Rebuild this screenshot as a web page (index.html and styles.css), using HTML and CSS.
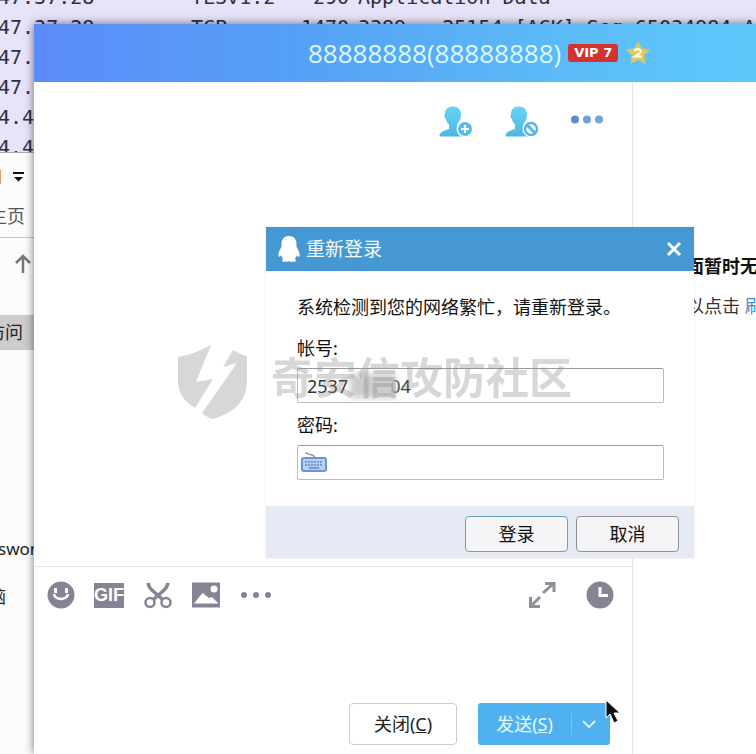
FILE: index.html
```html
<!DOCTYPE html>
<html lang="zh-CN">
<head>
<meta charset="utf-8">
<title>重新登录</title>
<link rel="stylesheet" href="styles.css">
</head>
<body>
<div class="desktop">
  <div class="packets">
    <div class="packet"><span>47.37.28</span><span>TLSv1.2</span><span class="length">290</span><span>Application Data</span></div>
    <div class="packet"><span>47.37.28</span><span>TCP</span><span class="length">1470</span><span>3389 → 25154 [ACK] Seq=65034984 A</span></div>
    <div class="packet"><span>47.</span></div>
    <div class="packet"><span>47.</span></div>
    <div class="packet"><span>4.4</span></div>
    <div class="packet"><span>4.4</span></div>
  </div>
  <div class="explorer">
    <div class="quick">
      <i class="folder"></i>
      <svg width="12" height="12" viewBox="0 0 12 12"><path d="M1 1h11v2H1zM2 6h9l-4.500 4.500z" fill="#111"/></svg>
    </div>
    <div class="tab">主页</div>
    <div class="up"><svg width="18" height="20" viewBox="0 0 18 20"><path d="M9 19V2M2 9l7-7 7 7" fill="none" stroke="#777" stroke-width="2.500"/></svg></div>
    <div class="access">访问</div>
    <div class="password">sword</div>
    <div class="computer">脑</div>
  </div>

  <main class="chat">
    <header class="chat-head">
      <h1>88888888(88888888)</h1>
      <span class="vip">VIP 7</span>
      <svg class="star" width="26" height="26" viewBox="0 0 26 26"><path d="M13 2l3.200 7 7.800.8-5.600 5.300 1.500 7.900-6.900-3.900L6.100 23l1.500-7.900L2 9.800 9.800 9z" fill="#e7c955" stroke="#c9c77c" stroke-width="1.500" stroke-linejoin="round"/><path d="M9 10q6-2 7 1 0 2-6 5.500h7" fill="none" stroke="#fffbe0" stroke-width="2.200"/></svg>
    </header>
    <div class="chat-body">
      <section class="conversation">
        <div class="actions">
          <button aria-label="添加好友"><svg width="36" height="34" viewBox="0 0 36 34"><defs><linearGradient id="person" x1="0" y1="0" x2="0" y2="1"><stop offset="0" stop-color="#68d3f5"/><stop offset="1" stop-color="#4fb4e2"/></linearGradient></defs><path d="M7 9C7 4 10 1.500 15 1.500s8 3 8 8c0 4-1.500 7-3.500 9v3l5 3v7H1.500c0-4 3-5.500 9.500-7.500v-4.500C9 17.500 8 15 7.500 13L6 12z" fill="url(#person)"/><circle cx="27" cy="24" r="8.500" fill="#fff"/><circle cx="27" cy="24" r="7" fill="#5cbce6"/><path d="M27 20v8M23 24h8" stroke="#fff" stroke-width="2"/></svg></button>
          <button aria-label="屏蔽"><svg width="36" height="34" viewBox="0 0 36 34"><path d="M7 9C7 4 10 1.500 15 1.500s8 3 8 8c0 4-1.500 7-3.500 9v3l5 3v7H1.500c0-4 3-5.500 9.500-7.500v-4.500C9 17.500 8 15 7.500 13L6 12z" fill="url(#person)"/><circle cx="27" cy="24" r="8.500" fill="#fff"/><circle cx="27" cy="24" r="6" fill="#fff" stroke="#57b8e5" stroke-width="2.500"/><path d="M23 20l8 8" stroke="#57b8e5" stroke-width="3"/></svg></button>
          <button aria-label="更多"><svg width="34" height="34" viewBox="0 0 34 34"><circle cx="5" cy="14.500" r="4" fill="#5f8fcb"/><circle cx="17" cy="14.500" r="4" fill="#719fd6"/><circle cx="29" cy="14.500" r="4" fill="#78a5cf"/></svg></button>
        </div>
        <div class="editor">
          <div class="tools">
            <button aria-label="表情"><svg width="28" height="28" viewBox="0 0 28 28"><circle cx="14" cy="14" r="13.500" fill="#858494"/><path d="M8.500 7v5M19.500 7v5" stroke="#fff" stroke-width="3"/><path d="M7 13c1 6.500 13 6.500 14 0" fill="none" stroke="#fff" stroke-width="2.500"/></svg></button>
            <button class="gif">GIF</button>
            <button aria-label="截图"><svg width="28" height="28" viewBox="0 0 28 28"><path d="M4 2q1 5 5 8l9 8M24 2q-1 5-5 8l-9 8" fill="none" stroke="#858494" stroke-width="3.500"/><circle cx="6" cy="21.500" r="4.500" fill="#fff" stroke="#858494" stroke-width="2.500"/><circle cx="22" cy="21.500" r="4.500" fill="#fff" stroke="#858494" stroke-width="2.500"/></svg></button>
            <button aria-label="图片"><svg width="28" height="28" viewBox="0 0 28 28"><path d="M0 1.500h28v25H0z" fill="#858494"/><path d="M2 22.500L10.500 12l6.500 5 3-1 6.500 6.500z" fill="#fff"/><circle cx="22" cy="8" r="3.500" fill="#fff"/></svg></button>
            <button aria-label="更多工具"><svg width="32" height="28" viewBox="0 0 32 28"><g fill="#858494"><circle cx="4" cy="14" r="3"/><circle cx="16" cy="14" r="3"/><circle cx="28" cy="14" r="3"/></g></svg></button>
            <button class="expand" aria-label="展开"><svg width="28" height="28" viewBox="0 0 28 28"><path d="M15 12L25 3M17 2.500h9V11M12 16L3 25M2.500 16v9.500H12" fill="none" stroke="#8e8d9a" stroke-width="3"/></svg></button>
            <button aria-label="聊天记录"><svg width="28" height="28" viewBox="0 0 28 28"><circle cx="14" cy="14" r="13.500" fill="#858494"/><path d="M14 6v8.500h8" fill="none" stroke="#fff" stroke-width="3"/></svg></button>
          </div>
          <div class="send-row">
            <button class="close-chat">关闭(<u>C</u>)</button>
            <div class="send-group">
              <button class="send">发送(<u>S</u>)</button>
              <button class="send-menu" aria-label="发送选项"><svg width="16" height="10" viewBox="0 0 16 10"><path d="M2 2l6 6 6-6" fill="none" stroke="#d9f3ff" stroke-width="2"/></svg></button>
            </div>
          </div>
        </div>
      </section>
      <aside class="side">
        <strong>面暂时无</strong>
        <p>以点击 <a href="#">刷</a></p>
      </aside>
    </div>
  </main>

  <form class="dialog">
    <header class="dialog-head">
      <svg width="24" height="28" viewBox="0 0 24 28"><path d="M12 1c5 0 7.500 3.500 7.500 8v3c2 3 3.500 6 3 9-.6 1.600-2 .3-2.700-.8-.3 1.500-1 2.500-2 3.500 1.500.8 1.700 2.800-.8 3-2 .2-4 0-5-.8-1 .8-3 1-5 .8-2.500-.2-2.300-2.200-.8-3-1-1-1.700-2-2-3.500-.7 1.100-2.100 2.400-2.700.8-.5-3 1-6 3-9V9C4.500 4.500 7 1 12 1z" fill="#fff"/></svg>
      <h2>重新登录</h2>
      <button type="button" class="dismiss" aria-label="关闭"><svg width="16" height="16" viewBox="0 0 16 16"><path d="M2 2l12 12M14 2L2 14" stroke="#fff" stroke-width="3"/></svg></button>
    </header>
    <div class="fields">
      <p>系统检测到您的网络繁忙，请重新登录。</p>
      <label for="account">帐号:</label>
      <div class="field"><input id="account" type="text" value="2537         04"><i class="smudge"></i></div>
      <label for="secret">密码:</label>
      <div class="field">
        <svg class="keyboard" width="26" height="24" viewBox="0 0 26 24"><path d="M5 1c0 4 8 1 9 6" fill="none" stroke="#8a9bb5" stroke-width="1.500"/><rect x="1" y="7" width="24" height="13" rx="2" fill="#b9d1f3" stroke="#6d94d0" stroke-width="2"/><path d="M4 11h18M4 14h18" stroke="#5d86c6" stroke-width="1.500" stroke-dasharray="2 1"/><path d="M8 17h10" stroke="#5d86c6" stroke-width="1.500"/></svg>
        <input id="secret" type="password">
      </div>
    </div>
    <footer class="dialog-foot">
      <button type="button" class="primary">登录</button>
      <button type="button">取消</button>
    </footer>
  </form>

  <div class="watermark">
    <svg width="70" height="90" viewBox="0 0 70 90"><path d="M0 24q17-3 33-12L18 49l17-3-18 29Q0 65 0 48zM55 17q6 4 14 6v25q0 28-34 38-5-1-11-6l35-50-14 4z" fill="#888"/></svg>
    <span>奇安信攻防社区</span>
  </div>
  <svg class="pointer" width="18" height="26" viewBox="0 0 18 26"><path d="M2 1v18l4-4 4 9 4-2-4-8h6z" fill="#111" stroke="#fff" stroke-width="1"/></svg>
</div>
</body>
</html>
```
FILE: styles.css
```css
* { box-sizing: border-box; }
body, h1, h2, p { margin: 0; }
body {
  font-family: "Noto Sans", "Noto Sans CJK SC", sans-serif;
  font-size: 18px;
  line-height: 24px;
  color: #222;
}
button, input { font: inherit; color: inherit; }
button { padding: 0; border: 0; background: none; }
svg { display: block; }

.desktop {
  position: relative;
  height: 100vh;
  overflow: hidden;
  background: #fcfcfc;
}

/* Packet list behind the chat */
.packets {
  height: 153px;
  overflow: hidden;
  background: #e7e3f8;
  border-bottom: 1px solid #aaa;
}
.packet {
  display: grid;
  grid-template-columns: 191px 110px 48px 1fr;
  height: 30px;
  font-family: "DejaVu Sans Mono", monospace;
  font-size: 20px;
  line-height: 30px;
  color: #303044;
  white-space: nowrap;
}
.packet:first-child { margin-top: -18px; }
.packet span:first-child { margin-left: -2px; }
.packet span:last-child:nth-child(4) { padding-left: 9px; }
.length { text-align: right; }

/* File explorer strip */
.explorer { width: 34px; overflow: hidden; white-space: nowrap; }
.quick { display: flex; justify-content: space-between; align-items: center; height: 48px; padding-right: 10px; }
.folder { width: 1px; height: 14px; background: #d8a060; }
.tab {
  display: flex;
  justify-content: flex-end;
  height: 37px;
  padding: 3px 9px 0 0;
  border-bottom: 1px solid #c8c8c8;
  color: #555;
}
.up { display: flex; justify-content: flex-end; align-items: center; height: 52px; padding-right: 2px; }
.up svg { flex: none; }
.access {
  display: flex;
  justify-content: flex-end;
  margin-top: 25px;
  height: 35px;
  padding: 5px 11px 0 0;
  background: #ccc;
}
.tab, .access { margin-left: -10px; }
.password { margin: 187px 0 0 -2px; font-size: 17px; }
.computer { margin: 23px 0 0 -12px; }

/* Chat window */
.chat {
  position: absolute;
  inset: 24px 0 0 34px;
  display: flex;
  flex-direction: column;
  background: #fff;
  box-shadow: 0 0 9px rgba(0, 0, 0, .55);
}
.chat-head {
  display: flex;
  align-items: center;
  height: 58px;
  padding-left: 274px;
  background: linear-gradient(90deg, #5b8cf9, #55a0f6 36%, #5bb9f7 70%, #5dc9fb);
}
.chat-head h1 {
  font-family: "Open Sans", sans-serif;
  font-size: 26px;
  font-weight: 400;
  line-height: 36px;
  color: #dcf8ff;
}
.vip {
  margin-left: 7px;
  padding: 0 6px;
  border-radius: 3px;
  background: #d3322e;
  color: #fff;
  font-family: "DejaVu Sans", sans-serif;
  font-size: 13px;
  font-weight: 700;
  line-height: 18px;
}
.star { margin-left: 7px; }
.chat-body { flex: 1; display: grid; grid-template-columns: 598fr 124fr; min-height: 0; }
.conversation { display: flex; flex-direction: column; justify-content: space-between; min-width: 0; }
.actions { display: flex; justify-content: flex-end; gap: 30px; padding: 23px 28px 0 0; }
.editor { height: 188px; border-top: 1px solid #e6e6e6; }
.tools { display: flex; align-items: center; gap: 20px; padding: 14px 18px 0 13px; }
.gif {
  width: 30px;
  height: 25px;
  background: #858494;
  color: #fff;
  font-family: "Liberation Sans", sans-serif;
  font-size: 18px;
  font-weight: 700;
  line-height: 25px;
}
.gif { margin-left: -1px; }
.expand { margin-left: auto; margin-right: 10px; }
.send-row { display: flex; justify-content: flex-end; gap: 21px; margin-top: 94px; padding-right: 22px; }
.close-chat { width: 108px; height: 42px; border: 1px solid #ccc; border-radius: 4px; }
.send-group { display: flex; align-items: center; width: 132px; height: 42px; border-radius: 3px; background: #4fb1ef; }
.send { flex: 1; color: #e4f8ff; }
.send-menu { display: flex; justify-content: center; align-items: center; width: 39px; height: 22px; padding-right: 4px; border-left: 1px solid #78c4f4; }

.side { border-left: 1px solid #e8e8e8; padding: 172px 0 0 53px; overflow: hidden; white-space: nowrap; }
.side strong { display: block; margin-bottom: 16px; color: #111; }
.side p { color: #333; }
.side a { color: #3c8ed0; text-decoration: none; }

/* Login dialog */
.dialog {
  position: absolute;
  left: 266px;
  top: 227px;
  width: 428px;
  background: #fff;
  color: #111;
  box-shadow: 0 0 1px #bbb;
}
.dialog-head { display: flex; align-items: center; gap: 5px; height: 44px; padding: 0 12px 0 11px; background: #4598d1; }
.dialog-head h2 { font-size: 19px; font-weight: 400; color: #f2fcff; }
.dismiss { margin-left: auto; }
.fields { padding: 24px 30px 26px 31px; }
.fields p { margin-bottom: 17px; white-space: nowrap; }
.fields label { display: block; margin-bottom: 8px; }
.field {
  position: relative;
  display: flex;
  align-items: center;
  height: 35px;
  border: 1px solid #bbb;
  border-top-color: #999;
  border-radius: 2px;
}
.field input { flex: 1; min-width: 0; height: 32px; padding: 0 9px; border: 0; outline: 0; background: transparent; color: #333; }
.field + label { margin-top: 10px; }
.smudge { position: absolute; left: 52px; top: 5px; width: 46px; height: 24px; background: #ccc; filter: blur(3px); }
.keyboard { flex: none; margin-left: 3px; }
.dialog-foot { display: flex; justify-content: flex-end; align-items: center; gap: 8px; height: 52px; padding: 3px 15px 0 0; background: #e5eaf5; }
.dialog-foot button { width: 103px; height: 36px; border: 1px solid #8f8f9c; border-radius: 4px; background: #f5f5f7; }
.dialog-foot .primary { border-color: #6ba3c4; }

/* Overlays */
.watermark {
  position: absolute;
  left: 178px;
  top: 333px;
  display: flex;
  align-items: center;
  gap: 23px;
  opacity: .33;
  color: #888;
  font-size: 43px;
  font-weight: 700;
  line-height: 60px;
  white-space: nowrap;
  pointer-events: none;
}
.pointer { position: absolute; left: 604px; top: 699px; }
```
